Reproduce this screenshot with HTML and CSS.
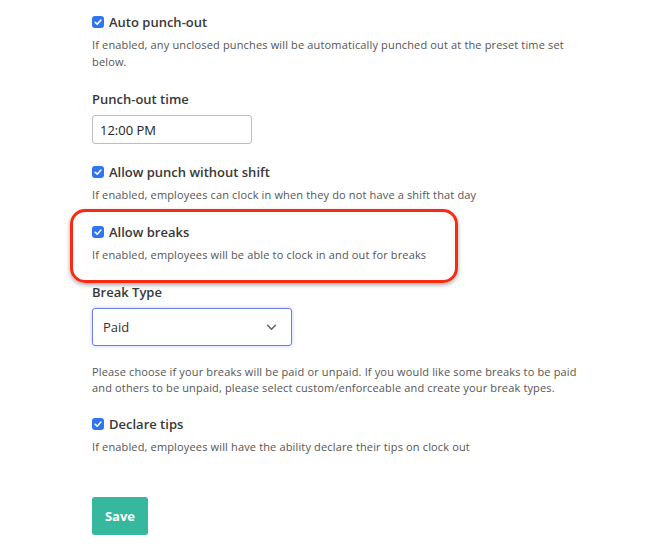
FILE: index.html
```html
<!DOCTYPE html>
<html lang="en">
<head>
  <meta charset="UTF-8">
  <meta name="viewport" content="width=device-width, initial-scale=1.0">
  <title>Time clock settings</title>
  <link rel="stylesheet" href="styles.css">
</head>
<body>
  <form class="settings">
    <div class="option">
      <label class="check"><span class="box"><svg viewBox="0 0 12 12"><path d="M3.2 6.3 5.2 8.2 8.9 4"/></svg></span>Auto punch-out</label>
      <p class="help">If enabled, any unclosed punches will be automatically punched out at the preset time set below.</p>
    </div>

    <div class="field">
      <label class="field-label">Punch-out time</label>
      <input class="time-input" type="text" value="12:00 PM">
    </div>

    <div class="option">
      <label class="check"><span class="box"><svg viewBox="0 0 12 12"><path d="M3.2 6.3 5.2 8.2 8.9 4"/></svg></span>Allow punch without shift</label>
      <p class="help">If enabled, employees can clock in when they do not have a shift that day</p>
    </div>

    <div class="option highlighted">
      <label class="check"><span class="box"><svg viewBox="0 0 12 12"><path d="M3.2 6.3 5.2 8.2 8.9 4"/></svg></span>Allow breaks</label>
      <p class="help">If enabled, employees will be able to clock in and out for breaks</p>
    </div>

    <div class="field">
      <label class="field-label">Break Type</label>
      <div class="select">
        <span>Paid</span>
        <svg class="chevron" viewBox="0 0 12 8"><path d="M1.5 1.5 6 6 10.5 1.5"/></svg>
      </div>
      <p class="help note">Please choose if your breaks will be paid or unpaid. If you would like some breaks to be paid and others to be unpaid, please select custom/enforceable and create your break types.</p>
    </div>

    <div class="option">
      <label class="check"><span class="box"><svg viewBox="0 0 12 12"><path d="M3.2 6.3 5.2 8.2 8.9 4"/></svg></span>Declare tips</label>
      <p class="help">If enabled, employees will have the ability declare their tips on clock out</p>
    </div>

    <button class="save" type="button">Save</button>
  </form>
</body>
</html>
```

FILE: styles.css
```css
* {
  margin: 0;
  padding: 0;
  box-sizing: border-box;
  font-family: 'Open Sans', Lato, sans-serif;
}

body {
  background-color: #fff;
  color: #3b3b3b;
}

.settings {
  width: 500px;
  margin-left: 92px;
  padding-top: 14px;
  display: flex;
  flex-direction: column;
}

.option {
  position: relative;
  margin-bottom: 21px;
}

.check {
  display: flex;
  align-items: center;
  gap: 5px;
  font-size: 13px;
  font-weight: 600;
  line-height: 16px;
  color: #383838;
}

.box {
  width: 12px;
  height: 12px;
  border-radius: 3px;
  background-color: #2f74f0;
  display: flex;
}

.box svg {
  width: 12px;
  height: 12px;
  fill: none;
  stroke: #fff;
  stroke-width: 1.6;
  stroke-linecap: round;
  stroke-linejoin: round;
}

.help {
  margin-top: 6px;
  font-size: 11px;
  letter-spacing: 0.15px;
  line-height: 17px;
  color: #555;
}

.highlighted::before {
  content: '';
  position: absolute;
  left: -22px;
  top: -15px;
  width: 382px;
  height: 68px;
  border: 3px solid #fa2a12;
  border-radius: 15px;
  box-shadow: 0 2px 4px rgba(0, 0, 0, 0.35);
}

.field {
  display: flex;
  flex-direction: column;
  margin-bottom: 20px;
}

.field-label {
  font-size: 13px;
  font-weight: 600;
  line-height: 16px;
  margin-bottom: 8px;
  color: #383838;
}

.time-input {
  width: 160px;
  height: 29px;
  padding: 0 7px;
  border: 1px solid #bdbdbd;
  border-radius: 3px;
  font-size: 13px;
  color: #222;
}

.select {
  width: 200px;
  height: 38px;
  padding: 0 14px 0 10px;
  border: 1px solid #6a7fe6;
  border-radius: 3px;
  box-shadow: 0 0 4px rgba(90, 110, 230, 0.35);
  display: flex;
  align-items: center;
  justify-content: space-between;
  font-size: 13px;
  color: #333;
}

.chevron {
  width: 11px;
  height: 7px;
  fill: none;
  stroke: #666;
  stroke-width: 1.8;
  stroke-linecap: round;
  stroke-linejoin: round;
}

.note {
  margin-top: 18px;
  line-height: 16px;
}

.save {
  width: 56px;
  height: 38px;
  margin-top: 21px;
  border: none;
  border-radius: 3px;
  background-color: #35b89d;
  color: #fff;
  font-size: 13px;
  font-weight: bold;
  cursor: pointer;
}
```
